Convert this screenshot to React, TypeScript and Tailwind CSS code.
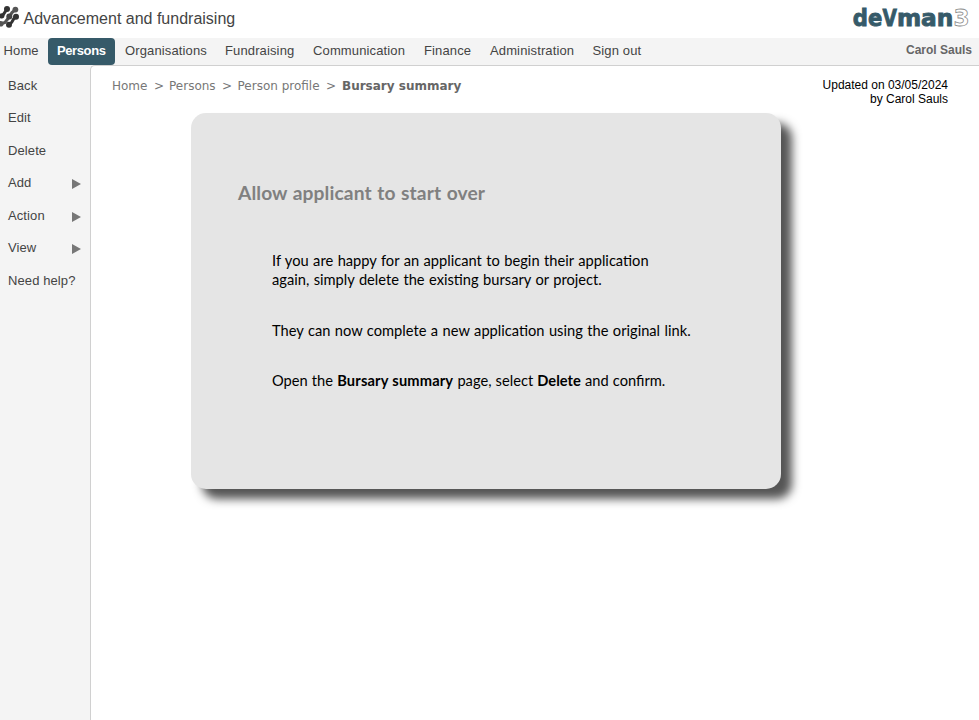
const nav = [
  { label: 'Home', cls: 'w-[48px] pl-[3.5px]' },
  { label: 'Persons', cls: 'w-[67px] pl-[9px] bg-[#365a69] text-white font-bold rounded-[4px] tracking-[-0.4px]' },
  { label: 'Organisations', cls: 'w-[100px] pl-[10px]' },
  { label: 'Fundraising', cls: 'w-[88px] pl-[10px]' },
  { label: 'Communication', cls: 'w-[111px] pl-[10px]' },
  { label: 'Finance', cls: 'w-[66px] pl-[10px]' },
  { label: 'Administration', cls: 'w-[102px] pl-[10px]' },
  { label: 'Sign out', cls: 'w-[80px] pl-[10.5px]' },
];

const menu = [
  { label: 'Back', sub: false },
  { label: 'Edit', sub: false },
  { label: 'Delete', sub: false },
  { label: 'Add', sub: true },
  { label: 'Action', sub: true },
  { label: 'View', sub: true },
  { label: 'Need help?', sub: false },
];

function BrandMark() {
  return (
    <svg width="20" height="26" viewBox="0 0 20 26" className="block shrink-0">
      <g stroke="#333" strokeWidth="3" fill="none">
        <path d="M-1 12.6 L2.6 11.6 L7 5" />
        <path d="M9 21 L11.8 18.2 L13.6 15 L16 12.8" />
      </g>
      <g stroke="#555" strokeWidth="3" fill="none">
        <path d="M9.5 12.4 L12 8.6 L15.4 5.6" />
        <path d="M0.8 19.8 L5 18.4 L8.4 14" />
      </g>
      <g fill="#333">
        <circle cx="7" cy="4.9" r="3" />
        <circle cx="1.8" cy="11.8" r="2.6" />
        <circle cx="16" cy="12.8" r="3" />
        <circle cx="9" cy="20.8" r="3" />
      </g>
      <g fill="#555">
        <circle cx="15.4" cy="5.6" r="2.9" />
        <circle cx="0.8" cy="19.8" r="2.8" />
      </g>
      <circle cx="9.3" cy="12.4" r="3" fill="#444" />
    </svg>
  );
}

function Logo() {
  return (
    <svg width="127" height="38" viewBox="0 0 127 38" className="block" fontFamily="'DejaVu Sans', sans-serif" fontWeight="700" fontSize="23.5">
      <g fill="#365a69" stroke="#365a69" strokeWidth="0.9">
        <text x="0.8" y="26" textLength="29.5" lengthAdjust="spacingAndGlyphs">de</text>
        <text x="30.4" y="26" textLength="14.4" lengthAdjust="spacingAndGlyphs">V</text>
        <text x="44.9" y="26" textLength="56.4" lengthAdjust="spacingAndGlyphs">man</text>
      </g>
      <text x="101.5" y="26" fill="#fff" stroke="#8a8a8a" strokeWidth="0.8" textLength="16" lengthAdjust="spacingAndGlyphs">3</text>
    </svg>
  );
}

export default function App() {
  return (
    <div className="flex h-[720px] w-[979px] flex-col overflow-hidden bg-white font-['Liberation_Sans',sans-serif] text-[#444]">
      <header className="flex h-[38px] shrink-0 justify-between">
        <div className="flex pt-[4px]">
          <BrandMark />
          <h1 className="pl-[3.5px] pt-[3px] text-[16px] leading-[24px]">Advancement and fundraising</h1>
        </div>
        <div className="w-[127px]"><Logo /></div>
      </header>
      <nav className="flex h-[27px] shrink-0 bg-[#f4f4f4] text-[13px] leading-[25px] tracking-[0.13px]">
        {nav.map((n) => (
          <a key={n.label} className={`block h-[27px] shrink-0 whitespace-nowrap ${n.cls}`}>{n.label}</a>
        ))}
        <span className="ml-auto pr-[7px] text-[12px] font-bold leading-[24px] tracking-normal text-[#666]">Carol Sauls</span>
      </nav>
      <div className="flex min-h-0 flex-1 bg-[#f4f4f4]">
        <aside className="w-[90px] shrink-0 pl-[8px] pt-[3.5px] text-[13px] tracking-[0.1px]">
          {menu.map((m) => (
            <div key={m.label} className="flex h-[32.5px] justify-between pr-[9px]">
              <span className="whitespace-nowrap leading-[33px]">{m.label}</span>
              {m.sub && (
                <svg width="9" height="10" viewBox="0 0 9 10" className="mt-[13.4px] block">
                  <path d="M0 0 L9 5 L0 10 Z" fill="#777" />
                </svg>
              )}
            </div>
          ))}
        </aside>
        <main className="flex-1 rounded-tl-[5px] border-l border-t border-[#d0d0d0] bg-white">
          <div className="flex h-[47px] justify-between pl-[21px] pr-[31px]">
            <div className="pt-[11px] font-['DejaVu_Sans',sans-serif] text-[12px] leading-[18px] text-[#777]">
              <div className="flex whitespace-nowrap">
                <span className="w-[42px]">Home</span><span className="w-[15px]">&gt;</span>
                <span className="w-[53px]">Persons</span><span className="w-[15.5px]">&gt;</span>
                <span className="w-[88.5px]">Person profile</span><span className="w-[16px]">&gt;</span>
                <b className="text-[#666]">Bursary summary</b>
              </div>
            </div>
            <div className="pt-[12px] text-right text-[12px] leading-[14px] text-black">
              <div>Updated on 03/05/2024</div>
              <div>by Carol Sauls</div>
            </div>
          </div>
          <section className="ml-[100px] h-[376px] w-[590px] rounded-[15px] bg-[#e5e5e5] pl-[47px] pt-[68px] font-['Lato',sans-serif] shadow-[11px_10px_10px_#555]">
            <h2 className="text-[19.2px] font-bold leading-[24px] tracking-[0.1px] text-[#808080] [word-spacing:0.8px]">Allow applicant to start over</h2>
            <div className="pl-[34px] pt-[46px] text-[14.67px] leading-[19px] text-black [word-spacing:0.7px]">
              <p className="whitespace-nowrap">If you are happy for an applicant to begin their application<br />again, simply delete the existing bursary or project.</p>
              <p className="mt-[32px] whitespace-nowrap">They can now complete a new application using the original link.</p>
              <p className="mt-[31px] whitespace-nowrap [word-spacing:0.4px]">Open the <b className="tracking-[0.15px]">Bursary summary</b> page, select <b>Delete</b> and confirm.</p>
            </div>
          </section>
        </main>
      </div>
    </div>
  );
}
